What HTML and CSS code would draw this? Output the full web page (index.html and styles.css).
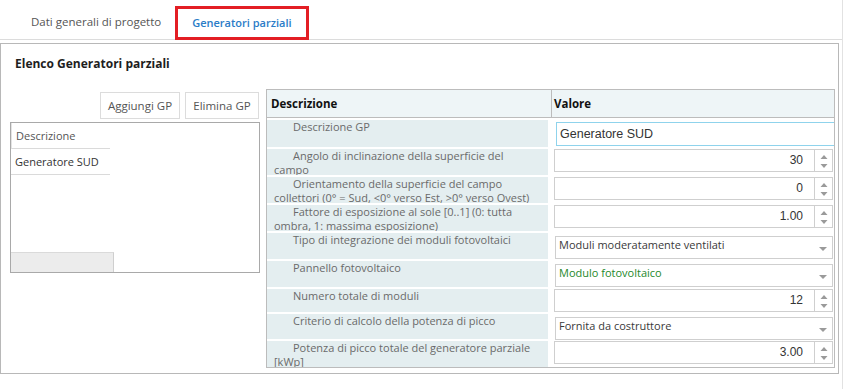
FILE: index.html
```html
<!DOCTYPE html>
<html lang="it">
<head>
    <meta charset="UTF-8">
    <meta name="viewport" content="width=device-width, initial-scale=1.0">
    <title>Generatori parziali</title>
    <link rel="stylesheet" href="styles.css">
</head>
<body>
<div class="page">
    <div class="tabs">
        <div class="tab">Dati generali di progetto</div>
        <div class="tab active">Generatori parziali</div>
    </div>

    <div class="panel">
        <h2 class="panel-title">Elenco Generatori parziali</h2>

        <div class="content">
            <div class="list-side">
                <div class="toolbar">
                    <button class="btn btn-add">Aggiungi GP</button>
                    <button class="btn btn-del">Elimina GP</button>
                </div>
                <div class="list">
                    <div class="list-head">Descrizione</div>
                    <div class="list-row">Generatore SUD</div>
                    <div class="list-scroll"></div>
                </div>
            </div>

            <div class="props">
                <div class="props-head">
                    <div class="head-cell head-desc">Descrizione</div>
                    <div class="head-cell">Valore</div>
                </div>
                <div class="props-body">
                    <div class="label">Descrizione GP</div>
                    <div class="value"><div class="text-input">Generatore SUD</div></div>

                    <div class="label">Angolo di inclinazione della superficie del campo</div>
                    <div class="value">
                        <div class="spin"><span class="spin-val">30</span><span class="spin-btn"><svg width="8" height="16" viewBox="0 0 8 16"><polygon points="0.5,6 4,2 7.5,6" /><polygon points="0.5,11 7.5,11 4,15" /></svg></span></div>
                    </div>

                    <div class="label">Orientamento della superficie del campo collettori (0° = Sud, &lt;0° verso Est, &gt;0° verso Ovest)</div>
                    <div class="value">
                        <div class="spin"><span class="spin-val">0</span><span class="spin-btn"><svg width="8" height="16" viewBox="0 0 8 16"><polygon points="0.5,6 4,2 7.5,6" /><polygon points="0.5,11 7.5,11 4,15" /></svg></span></div>
                    </div>

                    <div class="label">Fattore di esposizione al sole [0..1] (0: tutta ombra, 1: massima esposizione)</div>
                    <div class="value">
                        <div class="spin"><span class="spin-val">1.00</span><span class="spin-btn"><svg width="8" height="16" viewBox="0 0 8 16"><polygon points="0.5,6 4,2 7.5,6" /><polygon points="0.5,11 7.5,11 4,15" /></svg></span></div>
                    </div>

                    <div class="label">Tipo di integrazione dei moduli fotovoltaici</div>
                    <div class="value">
                        <div class="select">Moduli moderatamente ventilati<span class="caret"></span></div>
                    </div>

                    <div class="label">Pannello fotovoltaico</div>
                    <div class="value">
                        <div class="select select-green">Modulo fotovoltaico<span class="caret"></span></div>
                    </div>

                    <div class="label">Numero totale di moduli</div>
                    <div class="value">
                        <div class="spin"><span class="spin-val">12</span><span class="spin-btn"><svg width="8" height="16" viewBox="0 0 8 16"><polygon points="0.5,6 4,2 7.5,6" /><polygon points="0.5,11 7.5,11 4,15" /></svg></span></div>
                    </div>

                    <div class="label">Criterio di calcolo della potenza di picco</div>
                    <div class="value">
                        <div class="select">Fornita da costruttore<span class="caret"></span></div>
                    </div>

                    <div class="label">Potenza di picco totale del generatore parziale [kWp]</div>
                    <div class="value">
                        <div class="spin"><span class="spin-val">3.00</span><span class="spin-btn"><svg width="8" height="16" viewBox="0 0 8 16"><polygon points="0.5,6 4,2 7.5,6" /><polygon points="0.5,11 7.5,11 4,15" /></svg></span></div>
                    </div>
                </div>
            </div>
        </div>
    </div>
</div>
</body>
</html>
```

FILE: styles.css
```css
body { margin: 0; background: #fff; color: #555; font-family: "Open Sans", sans-serif; font-size: 11px; }
.page { width: 842px; height: 389px; border-right: 1px solid #e2e2e2; }

/* tabs */
.tabs { display: flex; align-items: flex-start; height: 39px; border-bottom: 1px solid #dcdcdc; padding-left: 17px; }
.tab { margin-top: 6px; height: 34px; line-height: 32px; padding: 0 14px; color: #555; font-size: 11.5px; box-sizing: border-box; }
.tab.active { border: 3px solid #e31e24; line-height: 27px; padding: 0 14px; color: #2a7cc7; font-weight: 600; font-size: 11px; }

/* panel */
.panel { margin-top: 3px; width: 839px; height: 331px; border: 1px solid #b8b8b8; box-sizing: border-box; }
.panel-title { margin: 0; padding: 10px 14px 0; line-height: 20px; font-size: 12px; font-weight: 700; color: #1e1e1e; }
.content { display: flex; gap: 6px; padding: 15px 0 0 9px; }

/* left list */
.list-side { width: 250px; }
.toolbar { display: flex; justify-content: flex-end; gap: 5px; margin-top: 3px; padding-right: 1px; }
.btn { height: 27px; border: 1px solid #dcdcdc; background: #fff; color: #555; font: inherit; font-size: 11.5px; padding: 0; cursor: pointer; }
.btn-add { width: 80px; }
.btn-del { width: 74px; }
.list { margin-top: 3px; height: 151px; border: 1px solid #a9a9a9; box-sizing: border-box; display: flex; flex-direction: column; }
.list-head, .list-row { width: 99px; height: 26px; line-height: 25px; border-bottom: 1px solid #dadada; box-sizing: border-box; }
.list-head { padding-left: 4px; border-left: 1px solid #e4e4e4; color: #555; }
.list-row { padding-left: 4px; color: #333; }
.list-scroll { margin-top: auto; width: 102px; height: 19px; background: #ececec; border-top: 1px solid #dadada; border-right: 1px solid #cfcfcf; }

/* property grid */
.props { width: 569px; border: 1px solid #bcbcbc; box-sizing: border-box; }
.props-head { display: grid; grid-template-columns: 285px 1fr; height: 28px; background: #eef5f7; border-bottom: 1px solid #bcbcbc; box-sizing: border-box; }
.head-cell { line-height: 27px; padding-left: 2px; font-weight: 700; color: #111; font-size: 11.5px; }
.head-desc { padding-left: 4px; border-right: 1px solid #bcbcbc; }
.props-body { display: grid; grid-template-columns: 281px 1fr; grid-template-rows: 27px 26px 26px 26px 26px 26px 23px 25px 26px; column-gap: 6px; row-gap: 2px; padding-top: 2px; }
.label { background: #e4eef0; padding: 0 9px 0 7px; text-indent: 19px; line-height: 13.5px; color: #6a6a6a; overflow: hidden; }
.value { min-width: 0; }

.text-input { margin: 2px 0 0 2px; height: 24px; border: 1px solid #8fd3ec; border-right: none; box-sizing: border-box; padding-left: 3px; line-height: 22px; font-family: "Liberation Sans", Arial, sans-serif; font-size: 12.5px; color: #333; }

.spin { display: flex; height: 23px; margin-right: 1px; border: 1px solid #cfcfcf; box-sizing: border-box; }
.spin-val { flex: 1; text-align: right; padding-right: 11px; line-height: 21px; font-family: "Liberation Sans", Arial, sans-serif; font-size: 12px; color: #333; }
.spin-btn { width: 17px; border-left: 1px solid #cfcfcf; display: flex; align-items: center; justify-content: center; }
.spin-btn svg { fill: #9a9a9a; }

.select { position: relative; margin: 3px 1px 0 1px; height: 23px; border: 1px solid #cfcfcf; box-sizing: border-box; padding-left: 3px; line-height: 15px; color: #3a3a3a; }
.select-green { color: #24882a; }
.caret { position: absolute; right: 5px; top: 10px; width: 0; height: 0; border-left: 4px solid transparent; border-right: 4px solid transparent; border-top: 4px solid #9a9a9a; }
```
